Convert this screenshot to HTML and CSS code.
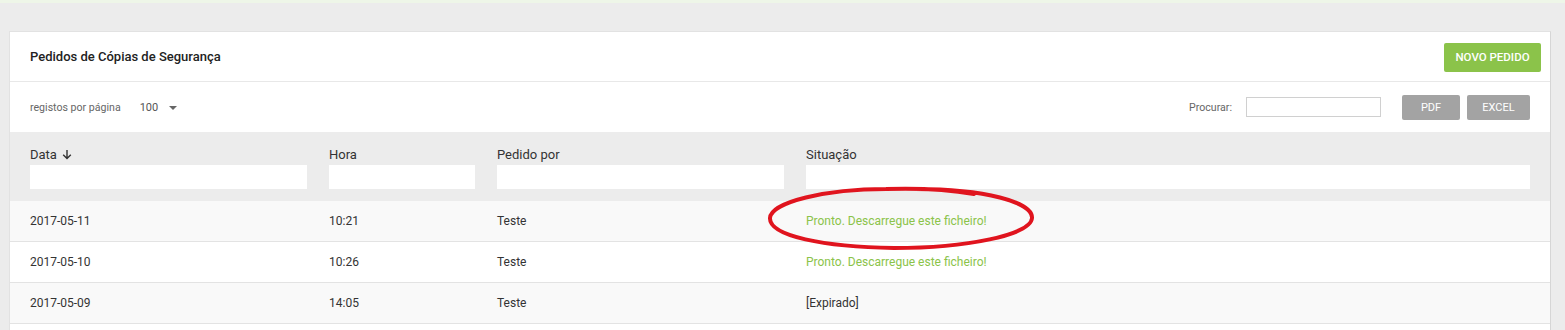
FILE: index.html
```html
<!DOCTYPE html>
<html lang="pt">
<head>
  <meta charset="UTF-8" />
  <title>Pedidos de Cópias de Segurança</title>
  <link rel="stylesheet" href="styles.css">
</head>
<body>
  <div class="topbar"></div>
  <div class="page">
    <div class="card">
      <div class="card-header">
        <div class="card-title">Pedidos de Cópias de Segurança</div>
        <button class="btn btn-green">NOVO PEDIDO</button>
      </div>
      <div class="toolbar">
        <div class="per-page">
          <span class="muted">registos por página</span>
          <span class="count">100</span>
          <span class="caret"></span>
        </div>
        <div class="tools">
          <label class="muted" for="search">Procurar:</label>
          <input type="text" id="search" class="search" />
          <button class="btn btn-grey btn-pdf">PDF</button>
          <button class="btn btn-grey btn-excel">EXCEL</button>
        </div>
      </div>
      <div class="table-wrap">
        <table class="grid">
          <colgroup>
            <col class="c-date"><col class="c-hour"><col class="c-by"><col>
          </colgroup>
          <thead>
            <tr>
              <th>
                <div class="th-label">Data
                  <svg class="sort" width="10" height="11" viewBox="0 0 10 11">
                    <path d="M5 1 V9.5 M1.2 5.8 L5 9.6 L8.8 5.8" fill="none" stroke="#333" stroke-width="1.4"/>
                  </svg>
                </div>
                <input type="text" />
              </th>
              <th><div class="th-label">Hora</div><input type="text" /></th>
              <th><div class="th-label">Pedido por</div><input type="text" /></th>
              <th><div class="th-label">Situação</div><input type="text" /></th>
            </tr>
          </thead>
          <tbody>
            <tr>
              <td>2017-05-11</td><td>10:21</td><td>Teste</td>
              <td><span class="ready">Pronto. Descarregue este ficheiro!</span></td>
            </tr>
            <tr>
              <td>2017-05-10</td><td>10:26</td><td>Teste</td>
              <td><span class="ready">Pronto. Descarregue este ficheiro!</span></td>
            </tr>
            <tr>
              <td>2017-05-09</td><td>14:05</td><td>Teste</td>
              <td>[Expirado]</td>
            </tr>
            <tr>
              <td></td><td></td><td></td><td></td>
            </tr>
          </tbody>
        </table>
        <!-- hand-drawn highlight around the first status -->
        <svg class="circle" width="272" height="68" viewBox="0 0 272 68">
          <path d="M150 4 C 218 4, 267 17, 266 33 C 265 50, 200 63, 128 63 C 58 62, 3 51, 4 33 C 5 17, 60 4, 120 4 C 150 3, 185 5, 208 9"
                fill="none" stroke="#e0141e" stroke-width="4" stroke-linecap="round"/>
        </svg>
      </div>
    </div>
  </div>
</body>
</html>
```

FILE: styles.css
```css
body {
  margin: 0;
  background: #ececec;
  font-family: Roboto, 'Liberation Sans', sans-serif;
  color: #333;
  overflow: hidden;
}
.topbar {
  height: 3px;
  background: #eef6e8;
}
.page {
  padding: 28px 14px 0 9px;
}
.card {
  background: #fff;
  border: 1px solid #e2e2e2;
  border-right-color: #d6d6d6;
}
.card-header {
  height: 49px;
  display: flex;
  justify-content: space-between;
  align-items: center;
  padding: 0 9px 0 20px;
  border-bottom: 1px solid #e8e8e8;
}
.card-title {
  font-size: 13px;
  font-weight: 500;
  color: #222;
  margin-top: -1px;
}
.btn {
  border: none;
  color: #fff;
  font-family: Roboto, 'Liberation Sans', sans-serif;
  font-size: 11px;
  border-radius: 2px;
  cursor: pointer;
}
.btn-green {
  background: #8bc34a;
  font-weight: 500;
  font-size: 11.5px;
  height: 29px;
  width: 97px;
  margin-top: 1px;
}
.btn-grey {
  background: #a3a3a3;
  height: 25px;
  padding: 0 12px;
}
.btn-pdf {
  width: 58px;
  margin-left: 21px;
  margin-right: 7px;
}
.btn-excel {
  width: 63px;
}
.toolbar {
  height: 50px;
  display: flex;
  justify-content: space-between;
  align-items: center;
  padding: 0 20px 0 20px;
}
.muted {
  font-size: 10.6px;
  color: #666;
}
.per-page {
  display: flex;
  align-items: center;
}
.count {
  font-size: 11px;
  color: #555;
  margin-left: 19px;
}
.caret {
  width: 0;
  height: 0;
  border-left: 4px solid transparent;
  border-right: 4px solid transparent;
  border-top: 4px solid #666;
  margin-left: 11px;
  margin-top: 2px;
}
.tools {
  display: flex;
  align-items: center;
}
.search {
  width: 129px;
  height: 18px;
  margin-left: 14px;
  border: 1px solid #d0d0d0;
  padding: 0 2px;
}
.table-wrap {
  position: relative;
}
.grid {
  width: 100%;
  border-collapse: collapse;
  table-layout: fixed;
}
.c-date { width: 308px; }
.c-hour { width: 168px; }
.c-by { width: 309px; }
.grid th {
  background: #ececec;
  text-align: left;
  font-weight: 400;
  font-size: 13px;
  color: #333;
  padding: 15px 11px 12px;
  vertical-align: top;
}
.th-label {
  height: 15px;
  line-height: 15px;
  display: flex;
  align-items: center;
  gap: 5px;
}
.grid th:first-child, .grid td:first-child {
  padding-left: 20px;
}
.grid th:last-child, .grid td:last-child {
  padding-right: 20px;
}
.grid th input {
  display: block;
  box-sizing: border-box;
  width: 100%;
  height: 24px;
  margin-top: 3px;
  border: none;
  background: #fff;
}
.sort {
  margin-top: -1px;
}
.grid td {
  font-size: 12px;
  height: 40px;
  padding: 0 11px;
  border-bottom: 1px solid #e3e3e3;
}
.grid tbody tr:nth-child(odd) {
  background: #f9f9f9;
}
.ready {
  color: #8bc34a;
}
.circle {
  position: absolute;
  left: 756px;
  top: 53px;
}
```
